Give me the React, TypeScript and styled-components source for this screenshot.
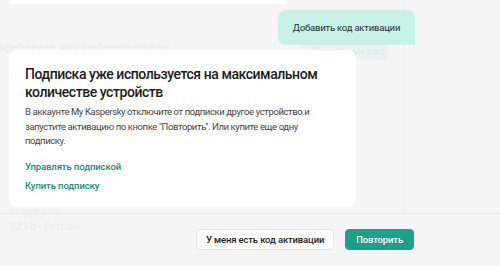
import styled, { createGlobalStyle } from 'styled-components';

const GlobalStyle = createGlobalStyle`
  html, body {
    margin: 0;
    padding: 0;
    background: #f5f5f5;
  }
  * {
    box-sizing: border-box;
  }
`;

const Page = styled.div`
  width: 500px;
  height: 266px;
  overflow: hidden;
  display: flex;
  flex-direction: column;
  background: #f5f5f5;
  font-family: Roboto, "Noto Sans", sans-serif;
`;

const ChatArea = styled.div`
  position: relative;
  height: 213px;
  display: flex;
  flex-direction: column;
  padding-left: 9px;
  width: 415px;
`;

const Ghost = styled.div`
  position: absolute;
  inset: 0;
  pointer-events: none;
  border-right: 1px solid #f0f0f0;
  width: 404px;
`;

const GhostText = styled.div<{ $top: number; $left: number }>`
  position: absolute;
  top: ${(p) => p.$top}px;
  left: ${(p) => p.$left}px;
  font-size: 11px;
  color: #ececec;
  white-space: nowrap;
`;

const GhostButton = styled.div`
  position: absolute;
  top: 45px;
  left: 300px;
  width: 88px;
  height: 15px;
  background: #ebf3f1;
  border-radius: 0 0 4px 4px;
  color: #e0eae8;
  font-size: 11px;
  padding-left: 12px;
  line-height: 14px;
`;

const TopStub = styled.div`
  width: 278px;
  height: 4px;
  background: #ffffff;
  border-radius: 0 0 6px 6px;
  position: relative;
`;

const BubbleRow = styled.div`
  display: flex;
  justify-content: flex-end;
  margin-top: 6px;
  position: relative;
`;

const Bubble = styled.div`
  width: 137px;
  height: 35px;
  background: #c6f2e8;
  border-radius: 8px 8px 0 8px;
  display: flex;
  align-items: center;
  justify-content: center;
  font-size: 9.5px;
  letter-spacing: -0.2px;
  color: #2b2b2b;
  padding-bottom: 1px;
`;

const Card = styled.div`
  position: relative;
  margin-top: 5px;
  width: 347px;
  height: 157px;
  background: #ffffff;
  border-radius: 8px;
  padding: 15px 16px 0 16px;
`;

const Title = styled.h2`
  margin: 0;
  font-size: 14px;
  line-height: 18px;
  font-weight: 500;
  letter-spacing: -0.45px;
  color: #1d1d1b;
`;

const Text = styled.p`
  margin: 4px 0 0;
  font-size: 9.5px;
  line-height: 14.5px;
  letter-spacing: -0.4px;
  color: #444444;
`;

const Links = styled.div`
  margin-top: 11px;
  display: flex;
  flex-direction: column;
  gap: 6px;
`;

const Link = styled.a`
  font-size: 9.5px;
  line-height: 13px;
  font-weight: 500;
  letter-spacing: -0.1px;
  color: #1a8a78;
  text-decoration: none;
`;

const Footer = styled.div`
  flex: 1;
  border-top: 1px solid #ebebeb;
  display: flex;
  justify-content: flex-end;
  align-items: flex-start;
  gap: 11px;
  padding: 15px 86px 0 0;
`;

const Button = styled.button<{ $primary?: boolean }>`
  height: 21px;
  padding: 0 ${(p) => (p.$primary ? '10px' : '9px')};
  border-radius: 4px;
  font-family: Roboto, "Noto Sans", sans-serif;
  font-size: 9.5px;
  font-weight: 500;
  letter-spacing: -0.15px;
  cursor: pointer;
  border: 1px solid ${(p) => (p.$primary ? '#1f9e89' : '#e6e6e6')};
  background: ${(p) => (p.$primary ? '#1f9e89' : '#ffffff')};
  color: ${(p) => (p.$primary ? '#ffffff' : '#1d1d1b')};
`;

export default function App() {
  return (
    <Page>
      <GlobalStyle />
      <ChatArea>
        <Ghost>
          <GhostText $top={41} $left={0}>крепление, или выберите файлы</GhostText>
          <GhostButton>Просто медиа ▾</GhostButton>
          <GhostText $top={205} $left={9}>image.png</GhostText>
          <GhostText $top={220} $left={9}>32 kb · Готово</GhostText>
        </Ghost>
        <TopStub />
        <BubbleRow>
          <Bubble>Добавить код активации</Bubble>
        </BubbleRow>
        <Card>
          <Title>Подписка уже используется на максимальном количестве устройств</Title>
          <Text>
            В аккаунте My Kaspersky отключите от подписки другое устройство и
            запустите активацию по кнопке "Повторить". Или купите еще одну
            подписку.
          </Text>
          <Links>
            <Link href="#">Управлять подпиской</Link>
            <Link href="#">Купить подписку</Link>
          </Links>
        </Card>
      </ChatArea>
      <Footer>
        <Button>У меня есть код активации</Button>
        <Button $primary>Повторить</Button>
      </Footer>
    </Page>
  );
}
